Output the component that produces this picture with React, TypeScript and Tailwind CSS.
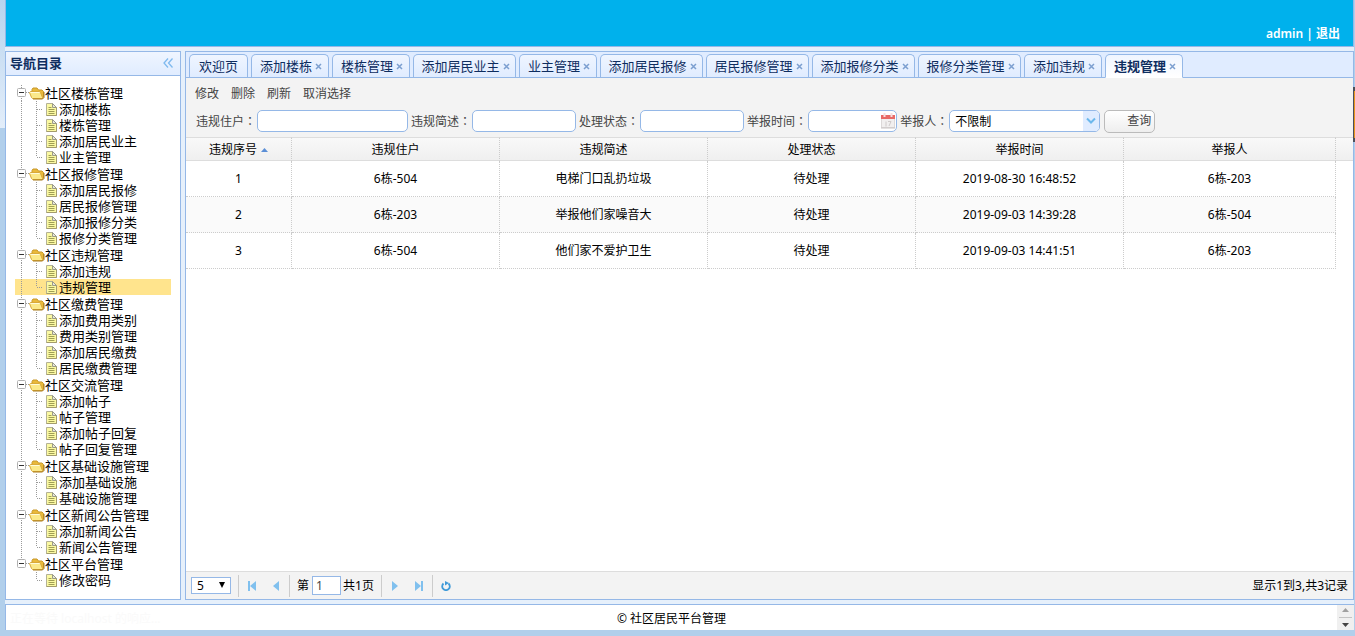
import { useState } from "react";

type Group = { name: string; items: string[] };
type Tab = { name: string; width: string; closable: boolean };

const menu: Group[] = [
  { name: "社区楼栋管理", items: ["添加楼栋", "楼栋管理", "添加居民业主", "业主管理"] },
  { name: "社区报修管理", items: ["添加居民报修", "居民报修管理", "添加报修分类", "报修分类管理"] },
  { name: "社区违规管理", items: ["添加违规", "违规管理"] },
  { name: "社区缴费管理", items: ["添加费用类别", "费用类别管理", "添加居民缴费", "居民缴费管理"] },
  { name: "社区交流管理", items: ["添加帖子", "帖子管理", "添加帖子回复", "帖子回复管理"] },
  { name: "社区基础设施管理", items: ["添加基础设施", "基础设施管理"] },
  { name: "社区新闻公告管理", items: ["添加新闻公告", "新闻公告管理"] },
  { name: "社区平台管理", items: ["修改密码"] },
];

const tabs: Tab[] = [
  { name: "欢迎页", width: "w-[59px]", closable: false },
  { name: "添加楼栋", width: "w-[78px]", closable: true },
  { name: "楼栋管理", width: "w-[78px]", closable: true },
  { name: "添加居民业主", width: "w-[103px]", closable: true },
  { name: "业主管理", width: "w-[78px]", closable: true },
  { name: "添加居民报修", width: "w-[103px]", closable: true },
  { name: "居民报修管理", width: "w-[103px]", closable: true },
  { name: "添加报修分类", width: "w-[103px]", closable: true },
  { name: "报修分类管理", width: "w-[103px]", closable: true },
  { name: "添加违规", width: "w-[78px]", closable: true },
  { name: "违规管理", width: "w-[78px]", closable: true },
];

const rows = [
  ["1", "6栋-504", "电梯门口乱扔垃圾", "待处理", "2019-08-30 16:48:52", "6栋-203"],
  ["2", "6栋-203", "举报他们家噪音大", "待处理", "2019-09-03 14:39:28", "6栋-504"],
  ["3", "6栋-504", "他们家不爱护卫生", "待处理", "2019-09-03 14:41:51", "6栋-203"],
];

const columns = ["违规序号", "违规住户", "违规简述", "处理状态", "举报时间", "举报人"];

const FolderIcon = () => (
  <svg width="16" height="16" viewBox="0 0 16 16" className="shrink-0">
    <path d="M3 12V4.5L4 3h4l1.500 2H13l1.500 1.500V12l-1 1.500H4z" fill="#e9b93a" stroke="#c8982a" />
    <path d="M.5 7.500L1.500 6.500H10.500L11.500 7.500L13.500 12.500L12.500 13.500H3.500L2.500 12.500z" fill="#fbe98a" stroke="#d9a93a" />
    <path d="M1.500 7.500H10.500" stroke="#fffbd8" />
    <path d="M4 14h9.500l1.500-1.500V7" fill="none" stroke="#a87a1c" />
  </svg>
);

const FileIcon = () => (
  <svg width="16" height="16" viewBox="0 0 16 16" className="shrink-0">
    <path d="M3.500 2.500H9.500L13.500 6.500V14.500H3.500z" fill="#fbf9a2" stroke="#b4b295" />
    <path d="M13.500 6.500V14.500H3.500" fill="none" stroke="#a39c6c" />
    <path d="M9.500 2.500L13.500 6.500H9.500z" fill="#e9e9dc" stroke="#9a9a86" />
    <path d="M5.500 6.500h3M5.500 8.500h6M5.500 10.500h6M5.500 12.500h6" stroke="#a09f55" />
  </svg>
);

const ToggleIcon = ({ first, last }: { first: boolean; last: boolean }) => (
  <svg width="14" height="17" viewBox="0 0 14 17" className="shrink-0">
    <path
      d={`M6.500 ${first ? 1 : 0}V4M6.500 12V${last ? 12 : 17}`}
      stroke="#9a9a9a"
      strokeDasharray="1 1"
    />
    <path d="M11 8.500h3" stroke="#9a9a9a" strokeDasharray="1 1" />
    <rect x="2.500" y="4.500" width="8" height="8" rx="1" fill="#fff" stroke="#b0b0b0" />
    <path d="M4 8.500h5" stroke="#333" />
  </svg>
);

const BranchIcon = ({ last, lastGroup }: { last: boolean; lastGroup: boolean }) => (
  <svg width="28" height="16" viewBox="0 0 28 16" className="shrink-0">
    {!lastGroup && <path d="M6.500 0V16" stroke="#9a9a9a" strokeDasharray="1 1" />}
    <path d={`M21.500 0V${last ? 8 : 16}M22 8.500h7`} stroke="#9a9a9a" strokeDasharray="1 1" fill="none" />
  </svg>
);

const CalendarIcon = () => (
  <svg width="14" height="16" viewBox="0 0 14 16">
    <rect x=".5" y="2.500" width="13" height="12" fill="#f1efef" stroke="#dcd8d8" />
    <path d="M0 2h14v4H0z" fill="#e86a66" />
    <path d="M3.500 0v4M10.500 0v4" stroke="#f6dede" strokeWidth="2" />
    <path d="M5 8.500v5M7 8.500h3l-2 4.500" fill="none" stroke="#cfcaca" />
    <path d="M0 15h14" stroke="#c9c4c4" />
  </svg>
);

const NavTree = () => {
  const [selected, setSelected] = useState("违规管理");

  return (
    <ul className="px-[9px] pt-2 text-[13px]">
      {menu.map((group, g) => (
        <li key={group.name}>
          <div className="flex h-[17px] items-center">
            <ToggleIcon first={g === 0} last={g === menu.length - 1} />
            <FolderIcon />
            <span className="leading-4">{group.name}</span>
          </div>
          <ul>
            {group.items.map((item, i) => (
              <li key={item}>
                <button
                  type="button"
                  onClick={() => setSelected(item)}
                  className={`flex h-4 w-full items-center whitespace-nowrap text-left ${
                    selected === item ? "bg-[#ffe48d]" : ""
                  }`}
                >
                  <BranchIcon
                    last={i === group.items.length - 1}
                    lastGroup={g === menu.length - 1}
                  />
                  <FileIcon />
                  <span className="leading-4">{item}</span>
                </button>
              </li>
            ))}
          </ul>
        </li>
      ))}
    </ul>
  );
};

const TabBar = () => {
  const [active, setActive] = useState("违规管理");

  return (
    <div className="flex h-[26px] shrink-0 gap-[3px] border-b border-[#95b8e7] bg-[#e0ecff] pl-[3px] pt-[2px]">
      {tabs.map((tab) => (
        <div
          key={tab.name}
          className={`flex shrink-0 items-center justify-center gap-[3px] rounded-t-[5px] border border-[#95b8e7] text-[13px] text-[#0e2d5f] ${tab.width} ${
            tab.closable ? "pl-[2px]" : ""
          } ${
            active === tab.name
              ? "-mb-px border-b-white bg-gradient-to-b from-[#eff5ff] to-white font-bold"
              : "border-b-0 bg-gradient-to-b from-[#eff5ff] to-[#e0ecff]"
          }`}
        >
          <button type="button" onClick={() => setActive(tab.name)} className="whitespace-nowrap leading-5">
            {tab.name}
          </button>
          {tab.closable && (
            <button type="button" aria-label={`关闭${tab.name}`}>
              <svg width="7" height="7" viewBox="0 0 7 7">
                <path d="M1 1l5 5M6 1L1 6" stroke="#7c9fd0" strokeWidth="1.500" />
              </svg>
            </button>
          )}
        </div>
      ))}
    </div>
  );
};

const Label = ({ id, text }: { id: string; text: string }) => (
  <label htmlFor={id} className="mr-px whitespace-nowrap">
    {text}
    <span className="font-['Noto_Sans_CJK_TC',sans-serif]">：</span>
  </label>
);

const fieldClass = "h-[22px] rounded-[5px] border border-[#95b8e7] bg-white outline-none";

const Toolbar = () => (
  <div className="h-[59px] shrink-0 bg-[#f3f3f3] text-xs text-[#444]">
    <div className="flex h-8 items-center gap-3 pl-[9px]">
      <button type="button">修改</button>
      <button type="button">删除</button>
      <button type="button">刷新</button>
      <button type="button">取消选择</button>
    </div>
    <form className="flex h-[22px] items-center gap-[3px] pl-[10px]" onSubmit={(e) => e.preventDefault()}>
      <div className="flex items-center">
        <Label id="house" text="违规住户" />
        <input id="house" className={`w-[151px] px-1 ${fieldClass}`} />
      </div>
      <div className="flex items-center">
        <Label id="desc" text="违规简述" />
        <input id="desc" className={`w-[104px] px-1 ${fieldClass}`} />
      </div>
      <div className="flex items-center">
        <Label id="status" text="处理状态" />
        <input id="status" className={`w-[104px] px-1 ${fieldClass}`} />
      </div>
      <div className="flex items-center">
        <Label id="time" text="举报时间" />
        <div className={`flex w-[89px] items-center pr-px ${fieldClass}`}>
          <input id="time" className="w-0 flex-1 px-1 outline-none" />
          <CalendarIcon />
        </div>
      </div>
      <div className="flex items-center">
        <Label id="reporter" text="举报人" />
        <div className={`relative w-[151px] overflow-hidden ${fieldClass}`}>
          <select
            id="reporter"
            className="h-full w-full appearance-none pl-[5px] pt-px text-black outline-none"
          >
            <option>不限制</option>
          </select>
          <span className="pointer-events-none absolute inset-y-0 right-0 flex w-4 items-center justify-center bg-[#e0ecff]">
            <svg width="10" height="8" viewBox="0 0 10 8">
              <path d="M1 1.500l4 4 4-4" fill="none" stroke="#6cb8ec" strokeWidth="2" />
            </svg>
          </span>
        </div>
      </div>
      <button
        type="submit"
        className="ml-px h-[23px] w-[51px] rounded-[5px] border border-[#bbb] bg-gradient-to-b from-white to-[#eee] pr-[3px] text-right"
      >
        查询
      </button>
    </form>
  </div>
);

const DataTable = () => (
  <table className="w-full table-fixed border-separate border-spacing-0 text-center text-xs text-black">
    <colgroup>
      <col className="w-[106px]" />
      <col />
      <col />
      <col />
      <col />
      <col className="w-[212px]" />
      <col className="w-[17px]" />
    </colgroup>
    <thead>
      <tr className="h-6 bg-gradient-to-b from-[#f9f9f9] to-[#efefef]">
        {columns.map((column, i) => (
          <th
            key={column}
            className="h-6 border-y border-r border-y-[#ddd] border-r-[#ccc] p-0 pt-px font-normal [border-right-style:dotted]"
          >
            <span className="inline-flex items-center gap-1">
              {column}
              {i === 0 && (
                <svg width="7" height="4" viewBox="0 0 7 4">
                  <path d="M0 4L3.500 0 7 4z" fill="#5b8fd6" />
                </svg>
              )}
            </span>
          </th>
        ))}
        <th className="border-y border-[#ddd] p-0" />
      </tr>
    </thead>
    <tbody>
      {rows.map((row, r) => (
        <tr key={row[0]}>
          {row.map((cell, c) => (
            <td
              key={c}
              className={`h-9 border-b border-r border-dotted border-[#ccc] p-0 ${r % 2 ? "bg-[#fafafa]" : ""}`}
            >
              {cell}
            </td>
          ))}
          <td className="p-0" />
        </tr>
      ))}
    </tbody>
  </table>
);

const PageButton = ({ label, path, bar }: { label: string; path: string; bar?: string }) => (
  <button type="button" aria-label={label} className="flex size-6 items-center justify-center">
    <svg width="10" height="10" viewBox="0 0 10 10">
      <path d={path} fill="#80c0ee" />
      {bar && <path d={bar} stroke="#80c0ee" strokeWidth="2" />}
    </svg>
  </button>
);

const Separator = () => <span className="h-[22px] w-px bg-[#ccc]" />;

const Pager = () => (
  <div className="flex h-7 shrink-0 items-center border-t border-[#ddd] bg-[#f3f3f3] px-[5px] text-xs text-black">
    <div className="relative mr-[7px]">
      <select
        aria-label="每页条数"
        className="block h-[17px] w-10 appearance-none border border-[#95b8e7] bg-white pl-[5px] leading-[15px] outline-none"
      >
        <option>5</option>
      </select>
      <svg width="6" height="6" viewBox="0 0 6 6" className="pointer-events-none absolute right-[6px] top-[5px]">
        <path d="M0 0h6L3 6z" fill="#000" />
      </svg>
    </div>
    <Separator />
    <div className="flex px-px">
      <PageButton label="首页" path="M9 0v10L3 5z" bar="M2 0v10" />
      <PageButton label="上一页" path="M8 0v10L2 5z" />
    </div>
    <Separator />
    <label htmlFor="page" className="ml-[7px]">第</label>
    <input
      id="page"
      defaultValue="1"
      className="ml-[3px] mr-[2px] h-[19px] w-[29px] border border-[#95b8e7] bg-white px-[3px] text-[#444] outline-none"
    />
    <span className="mr-[7px]">共1页</span>
    <Separator />
    <div className="flex px-px">
      <PageButton label="下一页" path="M2 0v10L8 5z" />
      <PageButton label="末页" path="M1 0v10L7 5z" bar="M8 0v10" />
    </div>
    <Separator />
    <button type="button" aria-label="刷新" className="ml-px flex size-6 items-center justify-center">
      <svg width="10" height="10" viewBox="0 0 10 10">
        <path d="M2.500 2.500A3.800 3.800 0 1 0 7.500 2.500" fill="none" stroke="#3f9ad8" strokeWidth="1.800" />
        <path d="M4 0l4 2-4 2.500z" fill="#3f9ad8" />
      </svg>
    </button>
    <span className="ml-auto">显示1到3,共3记录</span>
  </div>
);

const App = () => {
  return (
    <div className="relative flex h-screen flex-col overflow-hidden bg-[#b1cfeb] pb-[6px] pl-[5px] pr-px font-['Noto_Sans','Noto_Sans_CJK_SC',sans-serif]">
      <div className="absolute left-0 top-0 h-32 w-[5px] bg-gradient-to-b from-[#b9d4ee] to-[#e3eefa]" />
      <header className="flex h-[47px] shrink-0 items-end justify-end border-x border-b border-[#95b8e7] bg-[#00b1ec] pb-1 pr-[13px] text-xs font-semibold text-white">
        <span className="whitespace-pre">admin | </span>
        <a href="#logout">退出</a>
      </header>

      <div className="flex min-h-0 flex-1 gap-1 bg-[#e6f0fb] py-1">
        <aside className="flex w-44 shrink-0 flex-col border border-[#95b8e7] bg-white">
          <div className="flex h-6 shrink-0 items-center justify-between border-b border-[#95b8e7] bg-gradient-to-b from-[#eff5ff] to-[#e0ecff] pb-px pl-1 pr-[7px]">
            <h2 className="text-[13px] font-bold leading-4 text-[#0e2d5f]">导航目录</h2>
            <button type="button" aria-label="折叠">
              <svg width="10" height="10" viewBox="0 0 10 10">
                <path d="M5 .5L1 5l4 4.500M9.500.5L5.500 5l4 4.500" fill="none" stroke="#7fb9ef" strokeWidth="1.300" />
              </svg>
            </button>
          </div>
          <NavTree />
        </aside>

        <main className="flex min-w-0 flex-1 flex-col border border-[#95b8e7] bg-white">
          <TabBar />
          <Toolbar />
          <div className="min-h-0 flex-1">
            <DataTable />
          </div>
          <Pager />
        </main>
      </div>

      <footer className="relative flex h-[26px] shrink-0 border-l border-t border-[#95b8e7] bg-white text-xs text-black">
        <span className="absolute left-1 top-1 text-xs leading-5 text-[#fafafa]">
          正在等待 localhost 的响应...
        </span>
        <p className="flex-1 text-center leading-[27px]">© 社区居民平台管理</p>
        <div className="flex w-[17px] flex-col items-center justify-around bg-[#f0f0f0]">
          <svg width="7" height="4" viewBox="0 0 7 4">
            <path d="M0 4L3.500 0 7 4z" fill="#a0a0a0" />
          </svg>
          <span className="h-px w-[13px] bg-[#c4c4c4]" />
          <svg width="7" height="4" viewBox="0 0 7 4">
            <path d="M0 0L3.500 4 7 0z" fill="#444" />
          </svg>
        </div>
      </footer>

      <div className="absolute right-0 top-[87px] h-[55px] w-[2px] border-y-4 border-l border-[#4a4f5a] bg-[#e8951c]" />
    </div>
  );
};

export default App;
